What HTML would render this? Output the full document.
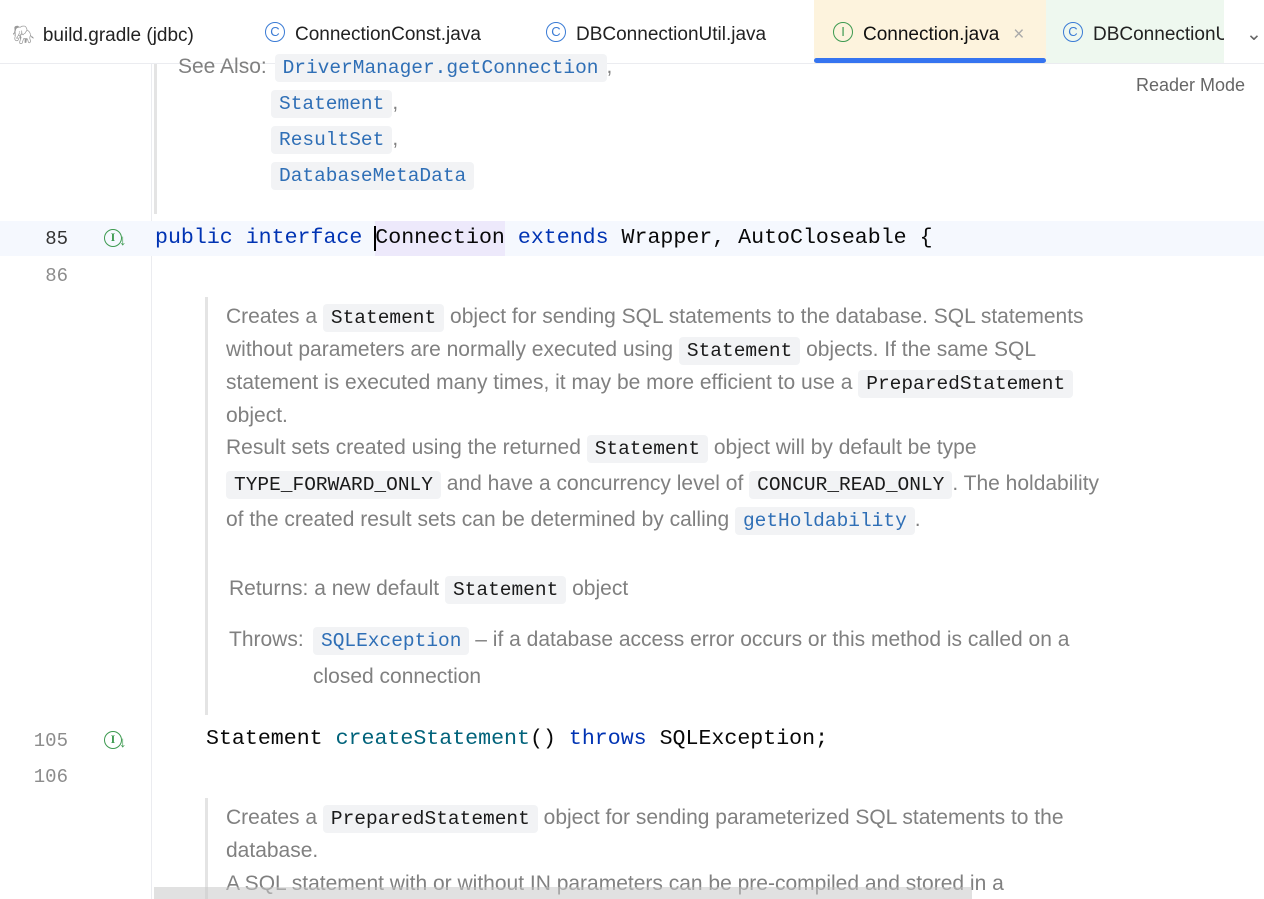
<!DOCTYPE html>
<html><head><meta charset="utf-8"><style>
*{margin:0;padding:0;box-sizing:border-box}
body{width:1264px;height:899px;overflow:hidden;background:#fff;position:relative;font-family:"Liberation Sans",sans-serif;}
.tabs{position:absolute;left:0;top:0;width:1264px;height:64px;border-bottom:1px solid #ebecf0;background:#fff}
.tab{position:absolute;top:0;height:63px;font-size:19px;color:#222;line-height:70px;white-space:nowrap}
.ic{display:inline-block;width:20px;height:20px;border-radius:50%;border:1.6px solid #3a7bd5;color:#3a7bd5;font-size:13px;line-height:17px;text-align:center;vertical-align:middle;margin-right:10px;position:relative;top:-3px}
.l{position:absolute;white-space:nowrap}
.code{font-family:"Liberation Mono",monospace;font-size:21.6px;color:#080808}
.kw{color:#0033b3}
.fn{color:#00627a}
.ln{position:absolute;left:0;width:68px;text-align:right;font-family:"Liberation Mono",monospace;font-size:19px;color:#8c8c8c}
.doc{font-size:21px;color:#808080}
.c{font-family:"Liberation Mono",monospace;font-size:19.5px;background:#f2f3f5;border-radius:4px;padding:3px 8px;color:#1a1a1a}
.a{color:#2f6fb6}
.gi{position:absolute;left:104px;width:18px;height:18px;border:1.6px solid #3d9a50;border-radius:50%;color:#3d9a50;font-size:12px;line-height:15px;text-align:center;font-family:"Liberation Serif",serif;font-weight:bold}
.ga{position:absolute;left:119px;color:#3d9a50;font-size:15px;font-weight:bold}
</style></head><body>
<div class="tabs">
  <div class="tab" style="left:12px"><span style="color:#999;margin-right:8px;font-size:18px">🐘︎</span>build.gradle (jdbc)</div>
  <div class="tab" style="left:265px"><span class="ic">C</span>ConnectionConst.java</div>
  <div class="tab" style="left:546px"><span class="ic">C</span>DBConnectionUtil.java</div>
  <div class="tab" style="left:814px;width:232px;background:#fdf3dd;padding-left:19px"><span class="ic" style="border-color:#3d9a50;color:#3d9a50">I</span><span style="color:#111">Connection.java</span><span style="color:#aaa;margin-left:14px">×</span></div>
  <div style="position:absolute;left:814px;top:58px;width:232px;height:5px;background:#3574f0;border-radius:3px"></div>
  <div class="tab" style="left:1046px;width:178px;background:#eef8ef;padding-left:17px;overflow:hidden"><span class="ic">C</span>DBConnectionU</div>
  <div class="tab" style="left:1246px;color:#666">⌄</div>
</div>
<div style="position:absolute;left:151px;top:64px;width:1px;height:835px;background:#ebecf0"></div>
<div style="position:absolute;left:154px;top:64px;width:3px;height:150px;background:#e4e4e4"></div>
<div class="l" style="left:1136px;top:75px;font-size:18px;color:#666">Reader Mode</div>

<div class="l doc" style="left:178px;top:55px">See Also: <span class="c a" style="margin-left:2px">DriverManager.getConnection</span>,</div>
<div class="l doc" style="left:271px;top:91px"><span class="c a">Statement</span>,</div>
<div class="l doc" style="left:271px;top:127px"><span class="c a">ResultSet</span>,</div>
<div class="l doc" style="left:271px;top:163px"><span class="c a">DatabaseMetaData</span></div>

<div style="position:absolute;left:0;top:221px;width:1264px;height:35px;background:#f5f8fe"></div>
<div style="position:absolute;left:375px;top:221px;width:130px;height:35px;background:#ede9fb"></div>
<div style="position:absolute;left:374px;top:226px;width:2px;height:25px;background:#000"></div>
<div class="ln" style="top:228px;color:#333">85</div>
<div class="gi" style="top:229px">I</div><div class="ga" style="top:232px">↓</div>
<div class="l code" style="left:155px;top:226px"><span class="kw">public interface</span> Connection <span class="kw">extends</span> Wrapper, AutoCloseable {</div>
<div class="ln" style="top:265px">86</div>

<div style="position:absolute;left:205px;top:297px;width:3px;height:418px;background:#e4e4e4"></div>
<div class="l doc" style="left:226px;top:305px">Creates a <span class="c">Statement</span> object for sending SQL statements to the database. SQL statements</div>
<div class="l doc" style="left:226px;top:338px">without parameters are normally executed using <span class="c">Statement</span> objects. If the same SQL</div>
<div class="l doc" style="left:226px;top:371px">statement is executed many times, it may be more efficient to use a <span class="c">PreparedStatement</span></div>
<div class="l doc" style="left:226px;top:404px">object.</div>
<div class="l doc" style="left:226px;top:436px">Result sets created using the returned <span class="c">Statement</span> object will by default be type</div>
<div class="l doc" style="left:226px;top:472px"><span class="c">TYPE_FORWARD_ONLY</span> and have a concurrency level of <span class="c">CONCUR_READ_ONLY</span>. The holdability</div>
<div class="l doc" style="left:226px;top:508px">of the created result sets can be determined by calling <span class="c a">getHoldability</span>.</div>
<div class="l doc" style="left:229px;top:577px">Returns: a new default <span class="c">Statement</span> object</div>
<div class="l doc" style="left:229px;top:628px">Throws:</div>
<div class="l doc" style="left:313px;top:628px"><span class="c a">SQLException</span> – if a database access error occurs or this method is called on a</div>
<div class="l doc" style="left:313px;top:665px">closed connection</div>

<div class="ln" style="top:730px">105</div>
<div class="gi" style="top:731px">I</div><div class="ga" style="top:734px">↓</div>
<div class="l code" style="left:206px;top:727px">Statement <span class="fn">createStatement</span>() <span class="kw">throws</span> SQLException;</div>
<div class="ln" style="top:766px">106</div>

<div style="position:absolute;left:205px;top:798px;width:3px;height:101px;background:#e4e4e4"></div>
<div class="l doc" style="left:226px;top:806px">Creates a <span class="c">PreparedStatement</span> object for sending parameterized SQL statements to the</div>
<div class="l doc" style="left:226px;top:839px">database.</div>
<div class="l doc" style="left:226px;top:872px">A SQL statement with or without IN parameters can be pre-compiled and stored in a</div>
<div style="position:absolute;left:154px;top:887px;width:818px;height:12px;background:rgba(200,200,200,0.55)"></div>
</body></html>
